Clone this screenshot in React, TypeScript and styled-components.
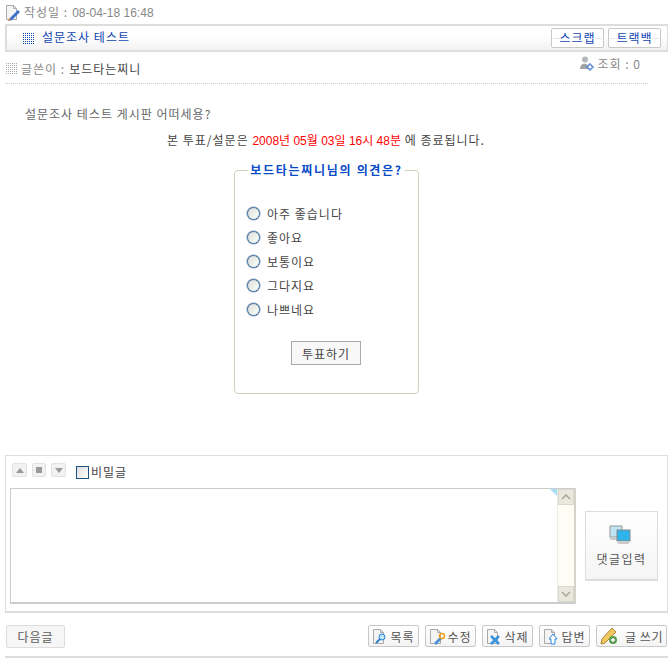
import React from "react";
import styled, { createGlobalStyle } from "styled-components";

const Global = createGlobalStyle`
  html, body { margin: 0; padding: 0; background: #fff; }
  body { font-family: "Noto Sans CJK KR", "Liberation Sans", sans-serif; font-size: 12px; color: #444; letter-spacing: 1px; }
  button { letter-spacing: 1px; }
`;
const Page = styled.div`
  width: 663px; margin-left: 5px; height: 670px; display: flex; flex-direction: column; overflow: hidden;
`;
const DateRow = styled.div`
  height: 24px; display: flex; align-items: center; gap: 2px; color: #888;
  & > span { margin-top: -2px; }
`;
const Digits = styled.span`
  font-family: "Liberation Sans", sans-serif; letter-spacing: 0; margin-left: 4px;
`;
const TitleBar = styled.div`
  height: 24px; border: 1px solid #ddd; border-top-width: 2px; border-left-width: 2px; box-shadow: 0 1px 0 #ddd;
  background: linear-gradient(#fff 40%, #f2f2f2); display: flex; align-items: center; padding: 0 6px 0 16px;
`;
const TitleText = styled.span`
  color: #1046b0; margin: -3px 0 0 8px; flex: 1;
`;
const SmallBtn = styled.button`
  width: 53px; height: 20px; padding: 0; margin-left: 4px; border: 1px solid #c8c8c8; border-radius: 2px; font: inherit; font-size: 12px; color: #1046b0; line-height: 16px;
  background-color: #fff;
  background-image: linear-gradient(#e8e8e8, #e8e8e8), linear-gradient(#e8e8e8, #e8e8e8);
  background-size: 7px 1px, 7px 1px; background-position: 1px 9px, calc(100% - 1px) 9px; background-repeat: no-repeat;
`;
const AuthorRow = styled.div`
  display: flex; align-items: flex-start; padding: 10px 7px 0 1px; border-bottom: 1px dotted #ccc; width: 643px; box-sizing: border-box; height: 33px;
  & > svg:first-child { margin-top: 2px; }
`;
const AuthorLabel = styled.span`
  color: #888; margin-left: 4px; line-height: 16px;
`;
const AuthorName = styled.span`
  color: #444; margin-left: 4px; line-height: 16px; flex: 1;
`;
const Views = styled.span`
  color: #888; line-height: 14px; display: flex; align-items: center; gap: 4px; margin-top: -5px;
`;
const Question = styled.p`
  margin: 21px 0 0 20px; line-height: 18px; color: #666;
`;
const Notice = styled.p`
  margin: 8px 0 0; line-height: 18px; text-align: center; width: 642px; color: #444;
`;
const Red = styled.span`
  color: #f00; font-family: "Liberation Sans", "Noto Sans CJK KR", sans-serif; letter-spacing: 0;
`;
const Field = styled.fieldset`
  width: 185px; height: 231px; box-sizing: border-box; margin: 13px 0 0 229px; border: 1px solid #d0d0bf; border-radius: 4px; padding: 0 12px; min-width: 0;
  & legend { color: #0a4bc8; font-weight: 700; padding: 0 2px; margin: 0 auto; line-height: 14px; font-size: 12px; letter-spacing: 1.7px; }
`;
const Options = styled.div`
  display: flex; flex-direction: column; margin-top: 24px;
`;
const Option = styled.label`
  height: 24px; display: flex; align-items: center; gap: 7px; color: #444;
`;
const Radio = styled.span`
  width: 13px; height: 13px; box-sizing: border-box; border: 1px solid #3a6a95; border-radius: 50%; background: linear-gradient(135deg, #dcdcd6, #fff); box-shadow: 0 0 0 0.5px #6a90b0;
`;
const VoteBtn = styled.button`
  display: block; width: 70px; height: 24px; margin: 20px 0 0 44px; padding: 0; border: 1px solid #aaa; background: #f8f8f8; font: inherit; color: #444;
`;
const CommentBox = styled.div`
  height: 158px; box-sizing: border-box; margin-top: 61px; border: 1px solid #ddd; border-bottom-width: 2px; padding: 7px 9px 8px 4px; display: flex; flex-direction: column;
`;
const Tools = styled.div`
  display: flex; align-items: flex-start; height: 25px; flex: none; padding-left: 2px;
`;
const Arrow = styled.span<{ $w: number }>`
  width: ${(p) => p.$w}px; height: 14px; box-sizing: border-box; border: 1px solid #e2e2e2; border-radius: 2px; background: #f2f2f2; margin-right: 5px; display: flex; align-items: center; justify-content: center;
`;
const Check = styled.span`
  width: 13px; height: 13px; box-sizing: border-box; margin: 3px 2px 0 5px; border: 1px solid #1e5080; background: linear-gradient(135deg, #ddd, #fff);
`;
const Secret = styled.span`
  color: #444; line-height: 18px;
`;
const InputRow = styled.div`
  display: flex; align-items: flex-start;
`;
const Area = styled.div`
  width: 566px; height: 116px; box-sizing: border-box; border: 1px solid #ccc; border-width: 1px 2px 2px 1px; border-color: #ccc #d4d4c8 #ccc #ccc; display: flex; justify-content: flex-end; position: relative;
`;
const Corner = styled.span`
  position: absolute; top: 0; right: 17px; border-top: 7px solid #a8dcf8; border-left: 7px solid transparent;
`;
const Scroll = styled.div`
  width: 16px; background: #fdfdf6; border-left: 1px solid #ecece2; display: flex; flex-direction: column; justify-content: space-between;
`;
const ScrollBtn = styled.span`
  height: 16px; background: #e8e8dc; border: 1px solid #d8d8cc; box-sizing: border-box; display: flex; align-items: center; justify-content: center;
`;
const SubmitBtn = styled.button`
  width: 73px; height: 70px; margin: 23px 0 0 9px; padding: 13px 0 0; border: 1px solid #ddd; border-bottom-width: 2px; background: linear-gradient(#fff, #f5f5f5); font: inherit; color: #555; display: flex; flex-direction: column; align-items: center; gap: 5px; letter-spacing: 1.4px;
  & svg { margin-right: 3px; }
`;
const Footer = styled.div`
  display: flex; align-items: center; margin-top: 11px; height: 24px; padding: 0 1px;
`;
const NextBtn = styled.button`
  width: 59px; height: 23px; padding: 0; border: 1px solid #ddd; border-radius: 2px; background: #f6f6f6; font: inherit; font-weight: 500; color: #777; margin-right: auto;
`;
const ActBtn = styled.button<{ $w: number }>`
  width: ${(p) => p.$w}px; height: 22px; padding: 0 2px; margin-left: 6px; box-sizing: border-box; border: 1px solid #c8c8c8; border-radius: 2px; background: linear-gradient(#fff, #f4f4f4); font: inherit; color: #555; display: flex; align-items: center; justify-content: center; gap: 1px; white-space: nowrap;
`;
const WriteLabel = styled.span`
  margin-left: 3px; letter-spacing: 0.6px;
`;
const Rule = styled.div`
  height: 2px; background: #ddd; margin-top: 8px;
`;

const Doc = ({ children }: { children?: React.ReactNode }) => (
  <svg width="17" height="17" viewBox="0 0 17 17">
    <path d="M1.5 1.5h7l3 3v11h-10z" fill="#f4f4f4" stroke="#aaa" />
    <path d="M8.5 1.5v3h3" fill="none" stroke="#aaa" />
    {children}
  </svg>
);

const Grid = ({ color, size = 11, step = 2 }: { color: string; size?: number; step?: number }) => {
  const c = Array.from({ length: Math.ceil(size / step) }, (_, i) => i * step);
  return (
    <svg width={size} height={size} viewBox={`0 0 ${size} ${size}`}>
      {c.flatMap((x) => c.map((y) => <rect key={`${x}-${y}`} x={x} y={y} width="1" height="1" fill={color} />))}
    </svg>
  );
};

const Person = () => (
  <svg width="15" height="15" viewBox="0 0 15 15">
    <circle cx="6" cy="3.5" r="3" fill="#b4b8b8" />
    <path d="M1 13c0-7 9-7 9 0z" fill="#a0a4a8" />
    <path d="M10 8h2v2h2v2h-2v2h-2v-2H8v-2h2z" fill="#fff" stroke="#3a70c8" strokeWidth="1" />
  </svg>
);

const Screens = () => (
  <svg width="22" height="20" viewBox="0 0 22 20">
    <rect x="1" y="1" width="12" height="11" fill="#bfe5f5" stroke="#999" />
    <rect x="1" y="12" width="8" height="3" fill="#ccc" />
    <rect x="8" y="5" width="13" height="11" fill="#2eb3ea" stroke="#888" />
    <rect x="9" y="16" width="11" height="3" fill="#ccc" />
  </svg>
);

const Tri = ({ down }: { down?: boolean }) => (
  <svg width="8" height="5" viewBox="0 0 8 5">
    <path d={down ? "M0 0h8L4 5z" : "M4 0l4 5H0z"} fill="#999" />
  </svg>
);

const Chev = ({ down }: { down?: boolean }) => (
  <svg width="10" height="6" viewBox="0 0 10 6">
    <path d={down ? "M1 1l4 4 4-4" : "M1 5l4-4 4 4"} fill="none" stroke="#a8a89c" strokeWidth="1.6" />
  </svg>
);

const Pencil = () => (
  <svg width="21" height="18" viewBox="0 0 21 18">
    <path d="M2 12L12 1l4 4L5 16l-4 1z" fill="#f0c860" stroke="#b08030" />
    <circle cx="13" cy="13" r="4" fill="#5a9a50" />
    <path d="M13 11v4M11 13h4" stroke="#fff" strokeWidth="1.4" />
  </svg>
);

export default function App() {
  return (
    <>
      <Global />
      <Page>
        <DateRow>
          <Doc><path d="M5 14l8-8 2 2-8 8-3 1z" fill="#3a70c8" /><path d="M4 14l2 2-3 1z" fill="#d84" /></Doc>
          <span>작성일 :<Digits>08-04-18 16:48</Digits></span>
        </DateRow>
        <TitleBar>
          <Grid color="#1046b0" />
          <TitleText>설문조사 테스트</TitleText>
          <SmallBtn>스크랩</SmallBtn>
          <SmallBtn>트랙백</SmallBtn>
        </TitleBar>
        <AuthorRow>
          <Grid color="#aaa" size={11} />
          <AuthorLabel>글쓴이 :</AuthorLabel>
          <AuthorName>보드타는찌니</AuthorName>
          <Views><Person />조회 : 0</Views>
        </AuthorRow>
        <Question>설문조사 테스트 게시판 어떠세용?</Question>
        <Notice>본 투표/설문은 <Red>2008년 05월 03일 16시 48분</Red> 에 종료됩니다.</Notice>
        <Field>
          <legend>보드타는찌니님의 의견은?</legend>
          <Options>
            {["아주 좋습니다", "좋아요", "보통이요", "그다지요", "나쁘네요"].map((t) => (
              <Option key={t}><Radio />{t}</Option>
            ))}
          </Options>
          <VoteBtn>투표하기</VoteBtn>
        </Field>
        <CommentBox>
          <Tools>
            <Arrow $w={15}><Tri /></Arrow>
            <Arrow $w={14}><svg width="6" height="6"><rect width="6" height="6" fill="#999" /></svg></Arrow>
            <Arrow $w={15}><Tri down /></Arrow>
            <Check />
            <Secret>비밀글</Secret>
          </Tools>
          <InputRow>
            <Area>
              <Corner />
              <Scroll>
                <ScrollBtn><Chev /></ScrollBtn>
                <ScrollBtn><Chev down /></ScrollBtn>
              </Scroll>
            </Area>
            <SubmitBtn><Screens />댓글입력</SubmitBtn>
          </InputRow>
        </CommentBox>
        <Footer>
          <NextBtn>다음글</NextBtn>
          <ActBtn $w={51}><Doc><circle cx="10" cy="9" r="3" fill="#bfe5f5" stroke="#2a80d0" /><path d="M8 11l-4 4" stroke="#2a80d0" strokeWidth="2" /></Doc>목록</ActBtn>
          <ActBtn $w={51}><Doc><path d="M5 15l6-6 2 2-6 6z" fill="#4a90d8" /><circle cx="13" cy="8" r="2.5" fill="none" stroke="#f0a020" strokeWidth="1.5" /></Doc>수정</ActBtn>
          <ActBtn $w={51}><Doc><path d="M5 8l8 8M13 8l-8 8" stroke="#3a90e0" strokeWidth="2.5" /></Doc>삭제</ActBtn>
          <ActBtn $w={51}><Doc><path d="M10 6l4 5h-2v5H8v-5H6z" fill="#fff" stroke="#2a88e0" /></Doc>답변</ActBtn>
          <ActBtn $w={71}><Pencil /><WriteLabel>글 쓰기</WriteLabel></ActBtn>
        </Footer>
        <Rule />
      </Page>
    </>
  );
}
